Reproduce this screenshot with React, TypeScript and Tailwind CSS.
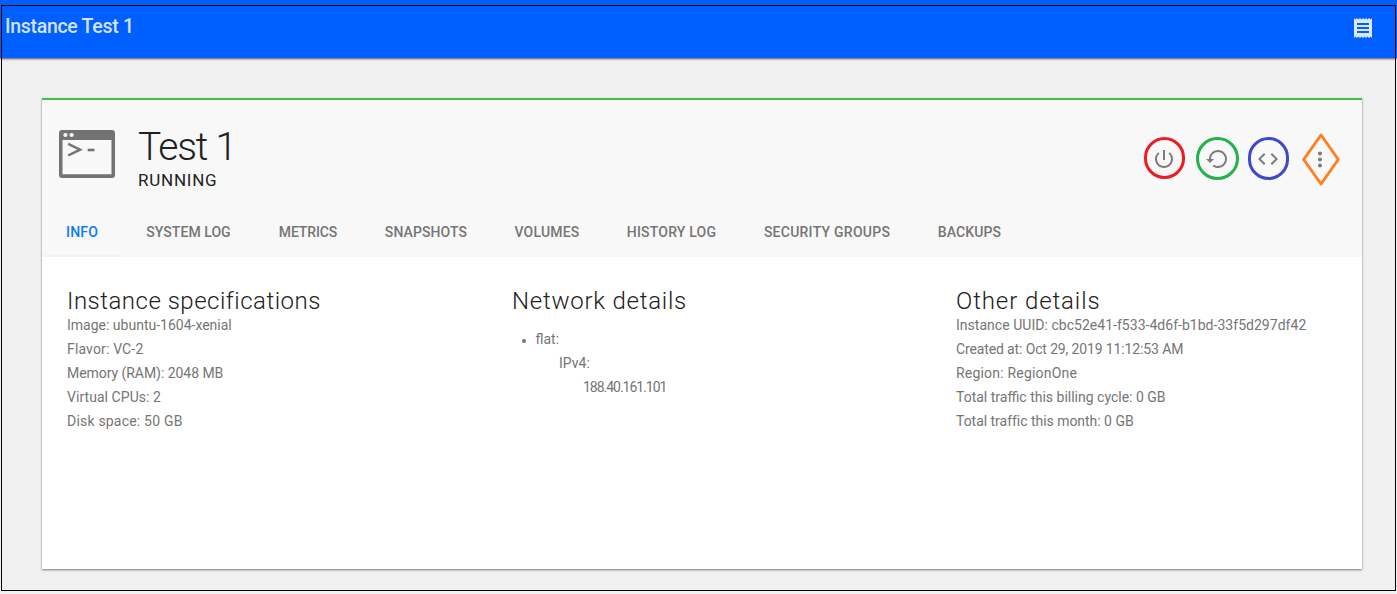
import type { ReactNode } from "react";

function TerminalIcon() {
  return (
    <svg className="h-[48px] w-[56px] shrink-0" viewBox="0 0 56 48" fill="none">
      <path
        fillRule="evenodd"
        fill="#737373"
        d="M3 0h50a3 3 0 0 1 3 3v42a3 3 0 0 1-3 3H3a3 3 0 0 1-3-3V3a3 3 0 0 1 3-3ZM3.5 10v34.3h49V10Z"
      />
      <circle cx="6.4" cy="5" r="2.1" fill="#f8f8f8" />
      <circle cx="12.6" cy="5" r="2.1" fill="#f8f8f8" />
      <path d="M9.2 13.9 21 19.7 9.2 25.5" stroke="#737373" strokeWidth="2.5" />
      <path d="M28.7 20h6.8" stroke="#737373" strokeWidth="2.6" />
    </svg>
  );
}

function MaterialIcon({ d }: { d: string }) {
  return (
    <svg className="size-6 shrink-0" viewBox="0 0 24 24" fill="currentColor">
      <path d={d} />
    </svg>
  );
}

const ICONS = {
  receipt:
    "M18 17H6v-2h12v2zm0-4H6v-2h12v2zm0-4H6V7h12v2zM3 22l1.5-1.5L6 22l1.5-1.5L9 22l1.5-1.5L12 22l1.5-1.5L15 22l1.5-1.5L18 22l1.5-1.5L21 22V2l-1.5 1.5L18 2l-1.5 1.5L15 2l-1.5 1.5L12 2l-1.5 1.5L9 2 7.5 3.5 6 2 4.5 3.5 3 2v20z",
  power:
    "M13 3h-2v10h2V3zm4.83 2.17l-1.42 1.42C17.99 7.86 19 9.81 19 12c0 3.87-3.13 7-7 7s-7-3.13-7-7c0-2.19 1.01-4.14 2.58-5.42L6.17 5.17C4.23 6.82 3 9.26 3 12c0 4.97 4.03 9 9 9s9-4.03 9-9c0-2.74-1.23-5.18-3.17-6.83z",
  restore:
    "M12 3c-4.97 0-9 4.03-9 9H0l4 4 4-4H5c0-3.87 3.13-7 7-7s7 3.13 7 7-3.13 7-7 7c-1.51 0-2.91-.49-4.06-1.3l-1.42 1.44C8.04 20.3 9.94 21 12 21c4.97 0 9-4.03 9-9s-4.03-9-9-9z",
  code: "M9.4 16.6L4.8 12l4.6-4.6L8 6l-6 6 6 6 1.4-1.4zm5.2 0l4.6-4.6-4.6-4.6L16 6l6 6-6 6-1.4-1.4z",
  more: "M12 8c1.1 0 2-.9 2-2s-.9-2-2-2-2 .9-2 2 .9 2 2 2zm0 2c-1.1 0-2 .9-2 2s.9 2 2 2 2-.9 2-2-.9-2-2-2zm0 6c-1.1 0-2 .9-2 2s.9 2 2 2 2-.9 2-2-.9-2-2-2z",
};

function RingButton({ className, children }: { className: string; children: ReactNode }) {
  return (
    <button className={`flex items-center justify-center rounded-full border-[3px] text-[#7b7b7b] ${className}`}>
      {children}
    </button>
  );
}

const TABS = [
  { label: "INFO", className: "w-20 tracking-[0.2px] text-[#0a7aff]" },
  { label: "SYSTEM LOG", className: "w-[133px] tracking-[0.05px]" },
  { label: "METRICS", className: "w-[106px] tracking-[-0.1px]" },
  { label: "SNAPSHOTS", className: "w-[130px] tracking-[0.1px]" },
  { label: "VOLUMES", className: "w-[112px] tracking-[0.2px]" },
  { label: "HISTORY LOG", className: "w-[137px] tracking-[0.2px]" },
  { label: "SECURITY GROUPS", className: "w-[174px] tracking-[0.25px]" },
  { label: "BACKUPS", className: "w-[111px] tracking-[0.1px]" },
];

export default function App() {
  return (
    <div className="relative h-[594px] w-[1397px] overflow-hidden bg-[#f0f0f0] font-['Roboto',sans-serif]">
      <header className="flex h-[58px] items-start justify-between bg-[#005fff] pl-[5px] pr-[22.5px] shadow-[0_1px_2px_rgba(0,0,0,0.65)]">
        <h1 className="pt-[13px] text-[19.5px] font-medium leading-7 tracking-[-0.3px] text-[#d4e3ff]">Instance Test 1</h1>
        <button className="mt-4 text-[#dce8ff]" aria-label="Log">
          <MaterialIcon d={ICONS.receipt} />
        </button>
      </header>

      <main className="ml-[42px] mt-10 h-[471px] w-[1320px] border-t-2 border-[#43bf43] bg-white shadow-[0_1px_2px_rgba(0,0,0,0.5)]">
        <div className="flex h-[157px] flex-col justify-between bg-[#f8f8f8]">
          <div className="flex items-start justify-between pl-[17px] pr-[22px]">
            <div className="flex gap-[23px] pt-[27px]">
              <div className="pt-[3px]">
                <TerminalIcon />
              </div>
              <div className="text-[#212121]">
                <h2 className="text-[39px] font-light leading-10 tracking-[-1.2px]">Test 1</h2>
                <p className="mt-px text-[17px] leading-6 tracking-[0.75px]">RUNNING</p>
              </div>
            </div>
            <div className="mt-[33px] flex h-[53px] items-center">
              <RingButton className="mb-[3px] mr-[11px] h-[42px] w-[41px] border-[#ed1c24] pr-px pt-px">
                <MaterialIcon d={ICONS.power} />
              </RingButton>
              <RingButton className="mb-[3px] mr-[9px] size-[43px] border-[#22b14c] pt-px">
                <MaterialIcon d={ICONS.restore} />
              </RingButton>
              <RingButton className="mb-0.5 mr-[13px] h-[43px] w-[41px] border-[#3f48cc] pr-px">
                <MaterialIcon d={ICONS.code} />
              </RingButton>
              <button className="text-[#7b7b7b]" aria-label="More">
                <svg className="h-[53px] w-[38px]" viewBox="0 0 38 53">
                  <path
                    d="M19 2 36.3 26.5 19 51 1.7 26.5Z"
                    fill="none"
                    stroke="#ff7f27"
                    strokeWidth="3"
                    strokeLinejoin="round"
                  />
                  <path transform="translate(6 14.5)" d={ICONS.more} fill="currentColor" />
                </svg>
              </button>
            </div>
          </div>
          <nav className="flex h-12 text-sm font-medium text-[#757575]">
            {TABS.map((t, i) => (
              <div
                key={t.label}
                className={`flex items-center justify-center border-b-2 ${
                  i === 0 ? "border-[#eff3ff]" : "border-transparent"
                } ${t.className}`}
              >
                {t.label}
              </div>
            ))}
          </nav>
        </div>

        <div className="flex pl-[25px] pt-8 text-sm leading-6 text-[#757575]">
          <section className="w-[445px]">
            <h3 className="text-2xl font-light leading-6 tracking-[0.5px] text-[#212121]">Instance specifications</h3>
            <p>Image: ubuntu-1604-xenial</p>
            <p className="tracking-[0.15px]">Flavor: VC-2</p>
            <p className="tracking-[-0.05px]">Memory (RAM): 2048 MB</p>
            <p className="tracking-[0.05px]">Virtual CPUs: 2</p>
            <p className="tracking-[0.2px]">Disk space: 50 GB</p>
          </section>
          <section className="w-[444px]">
            <h3 className="text-2xl font-light leading-6 tracking-[0.75px] text-[#212121]">Network details</h3>
            <ul className="mt-3.5 pl-[10px]">
              <li>
                <div className="flex items-center">
                  <span className="mr-[9.5px] mt-[3px] size-1 rounded-full bg-[#757575]" />
                  <span>flat:</span>
                </div>
                <p className="pl-[37px]">IPv4:</p>
                <p className="pl-[61px] tracking-[-1.02px]">188.40.161.101</p>
              </li>
            </ul>
          </section>
          <section>
            <h3 className="text-2xl font-light leading-6 tracking-[0.9px] text-[#212121]">Other details</h3>
            <p className="tracking-[0.03px]">Instance UUID: cbc52e41-f533-4d6f-b1bd-33f5d297df42</p>
            <p className="tracking-[-0.13px]">Created at: Oct 29, 2019 11:12:53 AM</p>
            <p className="tracking-[0.2px]">Region: RegionOne</p>
            <p>Total traffic this billing cycle: 0 GB</p>
            <p className="tracking-[-0.03px]">Total traffic this month: 0 GB</p>
          </section>
        </div>
      </main>

      <div className="pointer-events-none absolute left-px top-[5px] h-[586px] w-[1395px] border border-black" />
    </div>
  );
}
